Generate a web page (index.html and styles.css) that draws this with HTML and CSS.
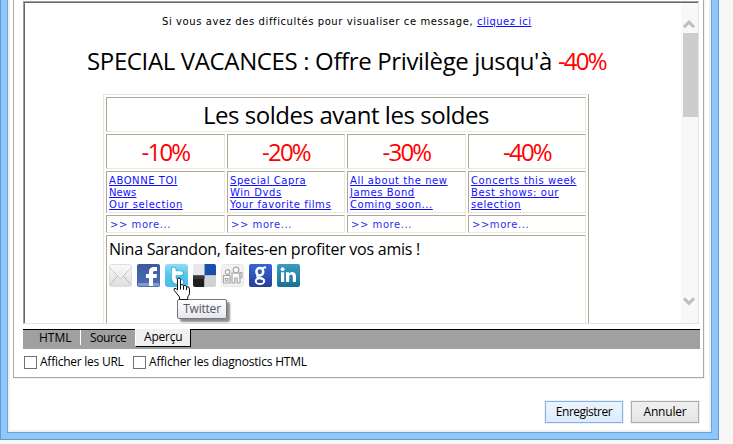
FILE: index.html
```
<!DOCTYPE html>
<html lang="fr">
<head>
<meta charset="utf-8">
<title>Aperçu</title>
<link rel="stylesheet" href="styles.css">
</head>
<body>
<div class="frame">
 <main class="dialog">
  <section class="group">
   <div class="preview">
    <div class="mail">
     <p class="notice"><span>Si vous avez des difficultés pour visualiser ce message, </span><a>cliquez ici</a></p>
     <h1 class="headline"><span>SPECIAL VACANCES : Offre Privilège jusqu'à </span><b>-40%</b></h1>
     <div class="table">
      <div class="cell full title">Les soldes avant les soldes</div>
      <div class="cell rate">-10%</div><div class="cell rate">-20%</div><div class="cell rate">-30%</div><div class="cell rate">-40%</div>
      <div class="cell links"><a>ABONNE TOI</a><a class="news">News</a><a>Our selection</a></div>
      <div class="cell links"><a>Special Capra</a><a>Win Dvds</a><a>Your favorite films</a></div>
      <div class="cell links"><a>All about the new</a><a>James Bond</a><a>Coming soon...</a></div>
      <div class="cell links"><a>Concerts this week</a><a>Best shows: our</a><a>selection</a></div>
      <div class="cell more">&gt;&gt; more...</div><div class="cell more">&gt;&gt; more...</div><div class="cell more">&gt;&gt; more...</div><div class="cell more">&gt;&gt;more...</div>
      <div class="cell full share">
       <p>Nina Sarandon, faites-en profiter vos amis !</p>
       <div class="icons">
        <svg viewBox="0 0 23 23"><defs>
         <linearGradient id="gm" x2="0" y2="1"><stop stop-color="#fafafa"/><stop offset="1" stop-color="#dedede"/></linearGradient>
         <linearGradient id="gf" x2="0" y2="1"><stop stop-color="#3c5a9b"/><stop offset="1" stop-color="#4c70b4"/></linearGradient>
         <linearGradient id="gt" x2="0" y2="1"><stop stop-color="#8edcf6"/><stop offset=".5" stop-color="#55c5ec"/><stop offset="1" stop-color="#48bce8"/></linearGradient>
         <linearGradient id="gg" x2="0" y2="1"><stop stop-color="#3765d2"/><stop offset="1" stop-color="#263f9b"/></linearGradient>
         <linearGradient id="gl" x2="0" y2="1"><stop stop-color="#3a9cc0"/><stop offset="1" stop-color="#197195"/></linearGradient></defs>
         <rect x=".5" y=".5" width="22" height="22" rx="2" fill="url(#gm)" stroke="#dedede"/><path d="M1 3.5 11.5 15 22 3.5M1 21l7.5-9M22 21l-7.5-9" fill="none" stroke="#bdbdbd"/><path d="M2 3.5 11.5 13.8 21 3.5" fill="none" stroke="#fff"/></svg>
        <svg viewBox="0 0 23 23"><rect width="23" height="23" rx="2" fill="url(#gf)"/><path d="M1 19h21v3H1z" fill="#839ccc"/><path d="M12 22v-8H9v-4h3V8c0-3.5 2-5 5-5h3v4h-2c-1.7 0-2 .5-2 1.6V10h4l-.5 4H16v8z" fill="#fff"/></svg>
        <svg viewBox="0 0 23 23"><rect width="23" height="23" rx="3" fill="url(#gt)"/><path d="M8.7 5.5v8c0 3 1.6 4.4 4.5 4.4h3M8.7 9.3H16" fill="none" stroke="#2eaad5" stroke-width="5.6" stroke-linecap="round"/><path d="M8.7 5.5v8c0 3 1.6 4.4 4.5 4.4h3M8.7 9.3H16" fill="none" stroke="#fff" stroke-width="4" stroke-linecap="round"/></svg>
        <svg viewBox="0 0 23 23"><path d="M2 0h9.5v11.5H0V2q0-2 2-2" fill="#e8e8e9"/><path d="M11.5 0H21q2 0 2 2v9.5H11.5z" fill="#174fac"/><path d="M0 11.5h11.5V23H2q-2 0-2-2z" fill="#1e1e20"/><path d="M11.5 11.5H23V21q0 2-2 2h-9.5z" fill="#d1d2d4"/><path d="M0 11.5h11.5V15H0" fill="#373737"/></svg>
        <svg viewBox="0 0 23 23"><rect x=".5" y=".5" width="22" height="22" rx="3" fill="#f2f2f2" stroke="#e7e7e7"/><g fill="#fafafa" stroke="#a7a7a7" stroke-width="1.2"><circle cx="6.5" cy="8" r="2.3"/><path d="M2.5 11.5H9V19H2.5zM4.5 14.5H7V17H4.5zM11 9h8v10h-2.8v-5h-2.4v5H11z"/><circle cx="15" cy="6" r="2.8"/><path d="M19 8.5h1.8v5H19z"/></g></svg>
        <svg viewBox="0 0 23 23"><rect width="23" height="23" rx="2" fill="url(#gg)"/><ellipse cx="10.8" cy="7.8" rx="3.4" ry="3.7" fill="none" stroke="#fff" stroke-width="2.5"/><ellipse cx="11" cy="17.2" rx="4.2" ry="2.9" fill="none" stroke="#fff" stroke-width="2"/><path d="M13 4.5 17 3M9 11c-2 2 0 2.6 2.3 3.1 2.5.5 3.4 1.1 4 2.5" fill="none" stroke="#fff" stroke-width="2"/></svg>
        <svg viewBox="0 0 23 23"><rect width="23" height="23" rx="2" fill="url(#gl)"/><path d="M4 8.2h3.2V18H4zM9 8.2h3v1.5c1.8-2.7 7-2.4 7 2.2V18h-3.2v-5.4c0-3-3.6-2.7-3.6.1V18H9z" fill="#fff"/><circle cx="5.6" cy="5.2" r="1.9" fill="#fff"/></svg>
       </div>
      </div>
     </div>
    </div>
    <div class="scrollbar">
     <svg class="arrow" viewBox="0 0 12 10"><path d="M1 8.2 6 3.2l5 5" /></svg>
     <div class="thumb"></div>
     <svg class="arrow down" viewBox="0 0 12 10"><path d="M1 2.3 6 7.3l5-5" /></svg>
    </div>
   </div>
   <nav class="tabs"><span class="tab html">HTML</span><span class="tab source">Source</span><span class="tab active">Aperçu</span></nav>
   <div class="checks"><i></i><label class="urls">Afficher les URL</label><i></i><label class="diag">Afficher les diagnostics HTML</label></div>
  </section>
  <footer class="actions"><button class="save">Enregistrer</button><button>Annuler</button></footer>
 </main>
</div>
<div class="tooltip">Twitter</div>
<svg class="cursor" viewBox="0 0 18 23"><path d="M4.5 13V2.5Q4.5 1 6 1t1.5 1.5V8Q10 6.8 10.5 8.8 13 7.7 13.5 9.8 16.5 9 16.5 12v4q0 2-1.8 4v2.5H6.5V20L1.3 13.5Q.3 11.5 2 11.3q1 0 2.5 1.7z" fill="#fff" stroke="#111"/><path d="M7.5 8v4.5M10.5 8.8v4M13.5 9.8V13" stroke="#111"/></svg>
</body>
</html>
```
FILE: styles.css
```
* { box-sizing: border-box; }
body { margin: 0; width: 733px; height: 444px; overflow: hidden; background: #f7f7f7; color: #000; font: 12px/16px "Open Sans", sans-serif; }
p, h1 { margin: 0; }
.frame { width: 719px; height: 440px; border: 1px solid #6599c8; border-top: 0; background: #8dc7fb; padding: 0 6px 6px; }
.dialog { height: 433px; border: 1px solid #6da3d5; border-top: 0; background: #fff; box-shadow: inset 2px 0 #f0f0f0, inset -2px -2px #f0f0f0; padding: 0 7px 0 5px; }
.group { width: 691px; height: 378px; border: 1px solid #a8a8a8; border-top: 0; padding: 1px 3px 0 9px; box-shadow: 1px 1px #f0f0f0; }
.preview { display: flex; width: 676px; height: 323px; border: 1px solid #a0a0a0; border-right-color: #e3e3e3; border-bottom-color: #e3e3e3; box-shadow: inset 1px 1px #696969; }
.mail { width: 657px; height: 321px; overflow: hidden; padding: 12px 0 0 79px; }
.notice { display: flex; height: 16px; margin-left: 59px; white-space: pre; font: 10px/16px "DejaVu Sans", sans-serif; letter-spacing: .59px; }
.notice a { letter-spacing: .45px; }
a { color: #1010ff; text-decoration: underline; }
.headline { display: flex; height: 32px; margin: 15px 0 0 -16px; white-space: pre; font: 24px/32px "Open Sans", sans-serif; letter-spacing: -.36px; }
.headline b { font-weight: 400; color: red; letter-spacing: -1.8px; }
.table { display: grid; width: 486px; height: 300px; margin-top: 17px; border: 1px solid #ece9d8; border-right-color: #aca899; padding: 2px; gap: 2px; grid-template-columns: 119px 118px 119px 118px; grid-template-rows: 35px 35px 42px 18px 130px; }
.cell { border: 1px solid #ece9d8; border-top-color: #aca899; border-left-color: #aca899; white-space: nowrap; }
.full { grid-column: 1 / -1; }
.title, .rate { text-align: center; font-size: 24px; line-height: 33px; }
.title { letter-spacing: -.45px; }
.rate { color: red; letter-spacing: -1.8px; }
.links { display: flex; flex-direction: column; align-items: flex-start; padding: 3px 0 0 2px; font: 10px/12px "DejaVu Sans", sans-serif; letter-spacing: .57px; }
.links a { height: 12px; }
.links .news { letter-spacing: .1px; }
.more { padding-left: 3px; color: #3030e8; font: 10px/17px "DejaVu Sans", sans-serif; letter-spacing: .55px; }
.share { padding: 3px 2px 0; }
.share p { height: 25px; font-size: 16px; line-height: 21px; letter-spacing: -.25px; }
.icons { display: flex; gap: 5px; }
.icons svg { width: 23px; height: 23px; }
.scrollbar { display: flex; flex-direction: column; align-items: flex-end; width: 17px; height: 320px; margin-top: 1px; background: #f8f8f8; }
.arrow { width: 12px; height: 10px; margin: 16px 3px 4px 0; fill: none; stroke: #bebebe; stroke-width: 3; }
.thumb { width: 15px; height: 84px; background: #cdcdcd; }
.down { margin-top: 179px; }
.tabs { display: flex; width: 677px; height: 20px; margin-top: 5px; border-top: 1px solid #000; background: #a0a0a0; }
.tab { height: 15px; line-height: 16px; }
.html { width: 58px; padding-left: 16px; border-right: 1px solid #fff; }
.source { width: 54px; padding-left: 9px; letter-spacing: -.35px; }
.active { width: 56px; height: 18px; margin-top: -1px; padding-left: 8px; border: 1px solid #000; border-left-color: #fff; border-top: 0; background: #f0f0f0; letter-spacing: -.2px; }
.checks { display: flex; align-items: center; height: 26px; padding-left: 1px; }
.checks i { width: 13px; height: 13px; border: 1px solid #707070; background: #fff; }
.checks label { margin-left: 3px; white-space: nowrap; letter-spacing: -.25px; }
.urls { width: 93px; }
.checks .diag { letter-spacing: -.19px; }
.actions { display: flex; justify-content: flex-end; gap: 8px; padding: 23px 5px 0 0; }
button { width: 68px; height: 22px; border: 1px solid #acacac; background: linear-gradient(#f0f0f0, #e5e5e5); box-shadow: 0 0 0 1px #f0f0f0; padding: 0; font: 12px/18px "Open Sans", sans-serif; color: #000; letter-spacing: -.2px; }
.save { width: 78px; border-color: #7eb4ea; background: linear-gradient(#ecf4fc, #dcecfc); letter-spacing: -.5px; }
.tooltip { position: absolute; left: 177px; top: 299px; width: 50px; height: 20px; border: 1px solid #767676; border-radius: 2px; background: linear-gradient(#fff, #e4e5f0); box-shadow: 3px 3px 2px rgba(0,0,0,.45); color: #575757; text-align: center; line-height: 18px; letter-spacing: -.2px; }
.cursor { position: absolute; left: 173px; top: 277px; width: 18px; height: 23px; }
```
